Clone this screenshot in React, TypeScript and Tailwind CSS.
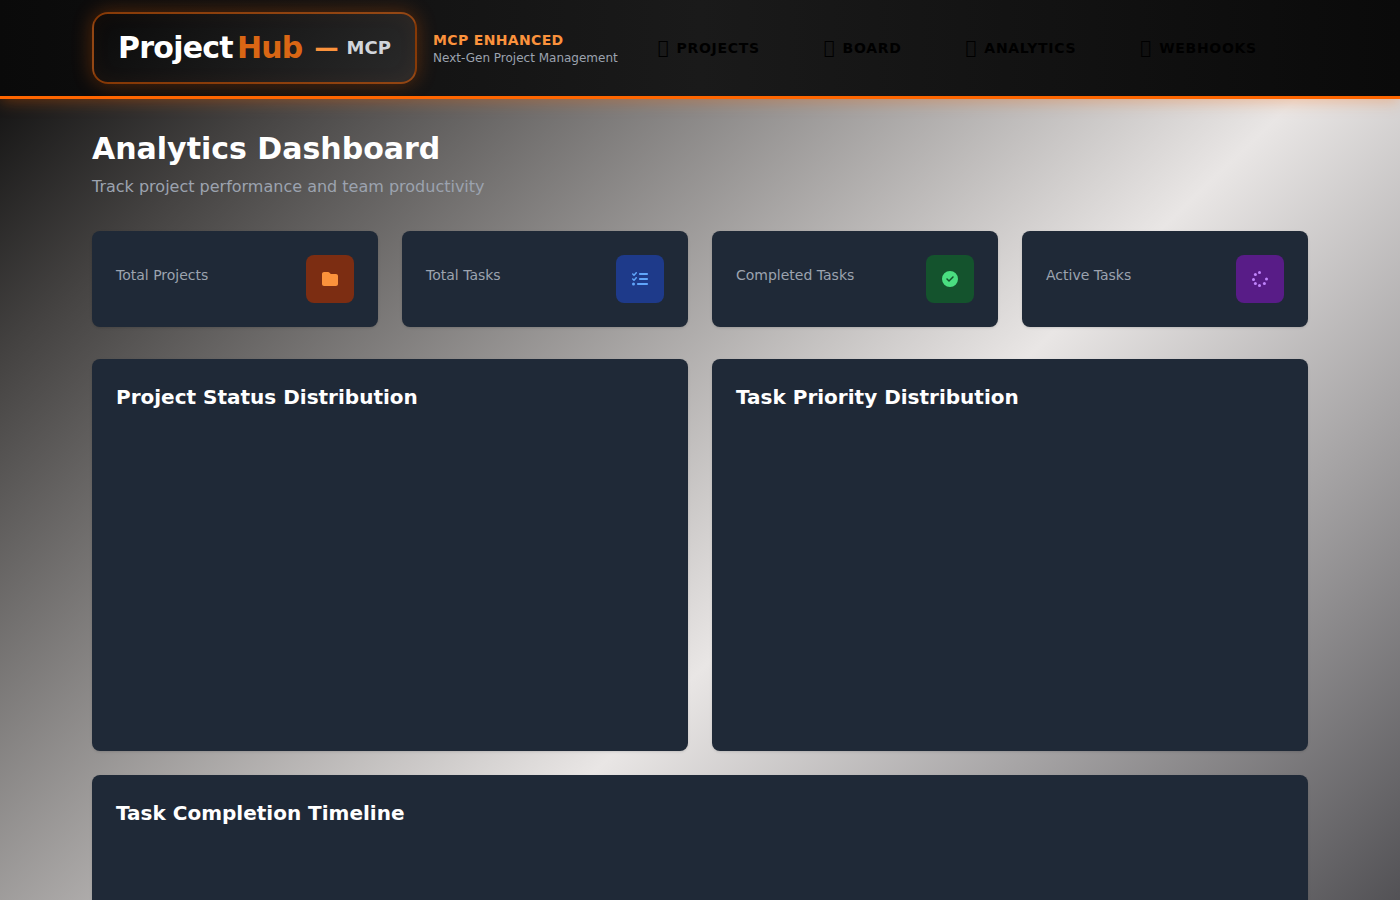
import { FaFolder, FaListCheck, FaCircleCheck } from "react-icons/fa6";
import type { ReactNode } from "react";

const navItems = [
  { icon: "\uf07b", label: "PROJECTS" },
  { icon: "\uf0db", label: "BOARD" },
  { icon: "\uf080", label: "ANALYTICS" },
  { icon: "\uf0c1", label: "WEBHOOKS" },
];

const spinnerDots = [
  [7.5, 1.5],
  [3.4, 3.4],
  [1.5, 8.4],
  [3.4, 12.6],
  [7.5, 14.5],
  [12.4, 12.6],
  [14.5, 8],
];

function Spinner() {
  return (
    <svg viewBox="0 0 16 16" className="size-4 fill-[#c084fc]">
      {spinnerDots.map(([cx, cy]) => (
        <circle key={`${cx}-${cy}`} cx={cx} cy={cy} r={1.5} />
      ))}
    </svg>
  );
}

function StatCard({ label, tone, children }: { label: string; tone: string; children: ReactNode }) {
  return (
    <div className="flex h-24 items-center justify-between rounded-lg bg-[#1f2937] px-6 shadow-sm">
      <p className="mb-2 text-sm leading-5 text-[#9ca3af]">{label}</p>
      <div className={`flex size-12 items-center justify-center rounded-lg ${tone}`}>{children}</div>
    </div>
  );
}

function Panel({ title }: { title: string }) {
  return (
    <section className="h-[392px] rounded-lg bg-[#1f2937] p-6 shadow-sm">
      <h2 className="text-xl font-semibold text-white">{title}</h2>
    </section>
  );
}

export default function App() {
  return (
    <div className="h-screen overflow-hidden bg-[linear-gradient(to_bottom_right,#040404_0%,#454342_13.5%,#e9e6e5_50%,#09090f_100%)] bg-[length:100%_1341px] bg-no-repeat font-['DejaVu_Sans',sans-serif]">
      <header className="relative h-[99px] border-b-[3px] border-[#ff6600] bg-[linear-gradient(90deg,#0a0a0a_0%,#1a1a1a_50%,#0a0a0a_100%)] shadow-[0_2px_15px_rgba(255,102,0,0.35)]">
        <div className="mx-auto flex h-24 w-[1216px] items-center">
          <div className="flex h-[72px] w-[325px] shrink-0 items-center rounded-2xl border-2 border-[#ff6600]/50 bg-[linear-gradient(135deg,#0a0a0a_0%,#1a1a1a_50%,#2a2a2a_100%)] px-6 shadow-[0_0_20px_rgba(255,102,0,0.3),inset_0_0_20px_rgba(255,102,0,0.05)]">
            <span className="text-3xl font-bold tracking-[-0.75px] text-white">Project</span>
            <span className="ml-1 text-3xl font-bold tracking-[-0.75px] text-[#d96614]">Hub</span>
            <span className="ml-3 text-2xl font-bold text-[#fb923c]">—</span>
            <span className="ml-2 text-lg font-semibold text-[#d1d5db]">MCP</span>
          </div>
          <div className="ml-4 w-[185px] shrink-0 whitespace-nowrap">
            <p className="text-sm leading-5 font-bold tracking-[0.35px] text-[#fb923c]">MCP ENHANCED</p>
            <p className="text-xs leading-4 text-[#9ca3af]">Next-Gen Project Management</p>
          </div>
          <nav className="ml-[39.75px] flex gap-16 text-sm font-bold tracking-[0.7px] text-black">
            {navItems.map((item) => (
              <a key={item.label} className="flex items-center">
                <span className="mr-2 text-lg font-normal tracking-normal">{item.icon}</span>
                {item.label}
              </a>
            ))}
          </nav>
        </div>
      </header>
      <main className="mx-auto w-[1216px] pt-8">
        <h1 className="text-3xl leading-9 font-bold text-white">Analytics Dashboard</h1>
        <p className="mt-2 text-base leading-6 text-[#9ca3af]">Track project performance and team productivity</p>
        <div className="mt-8 grid grid-cols-4 gap-6">
          <StatCard label="Total Projects" tone="bg-[#7c2d12]"><FaFolder className="size-4 text-[#fb923c]" /></StatCard>
          <StatCard label="Total Tasks" tone="bg-[#1e3a8a]"><FaListCheck className="size-4 text-[#60a5fa]" /></StatCard>
          <StatCard label="Completed Tasks" tone="bg-[#14532d]"><FaCircleCheck className="size-4 text-[#4ade80]" /></StatCard>
          <StatCard label="Active Tasks" tone="bg-[#581c87]"><Spinner /></StatCard>
        </div>
        <div className="mt-8 grid grid-cols-2 gap-6">
          <Panel title="Project Status Distribution" />
          <Panel title="Task Priority Distribution" />
        </div>
        <div className="mt-6"><Panel title="Task Completion Timeline" /></div>
      </main>
    </div>
  );
}
